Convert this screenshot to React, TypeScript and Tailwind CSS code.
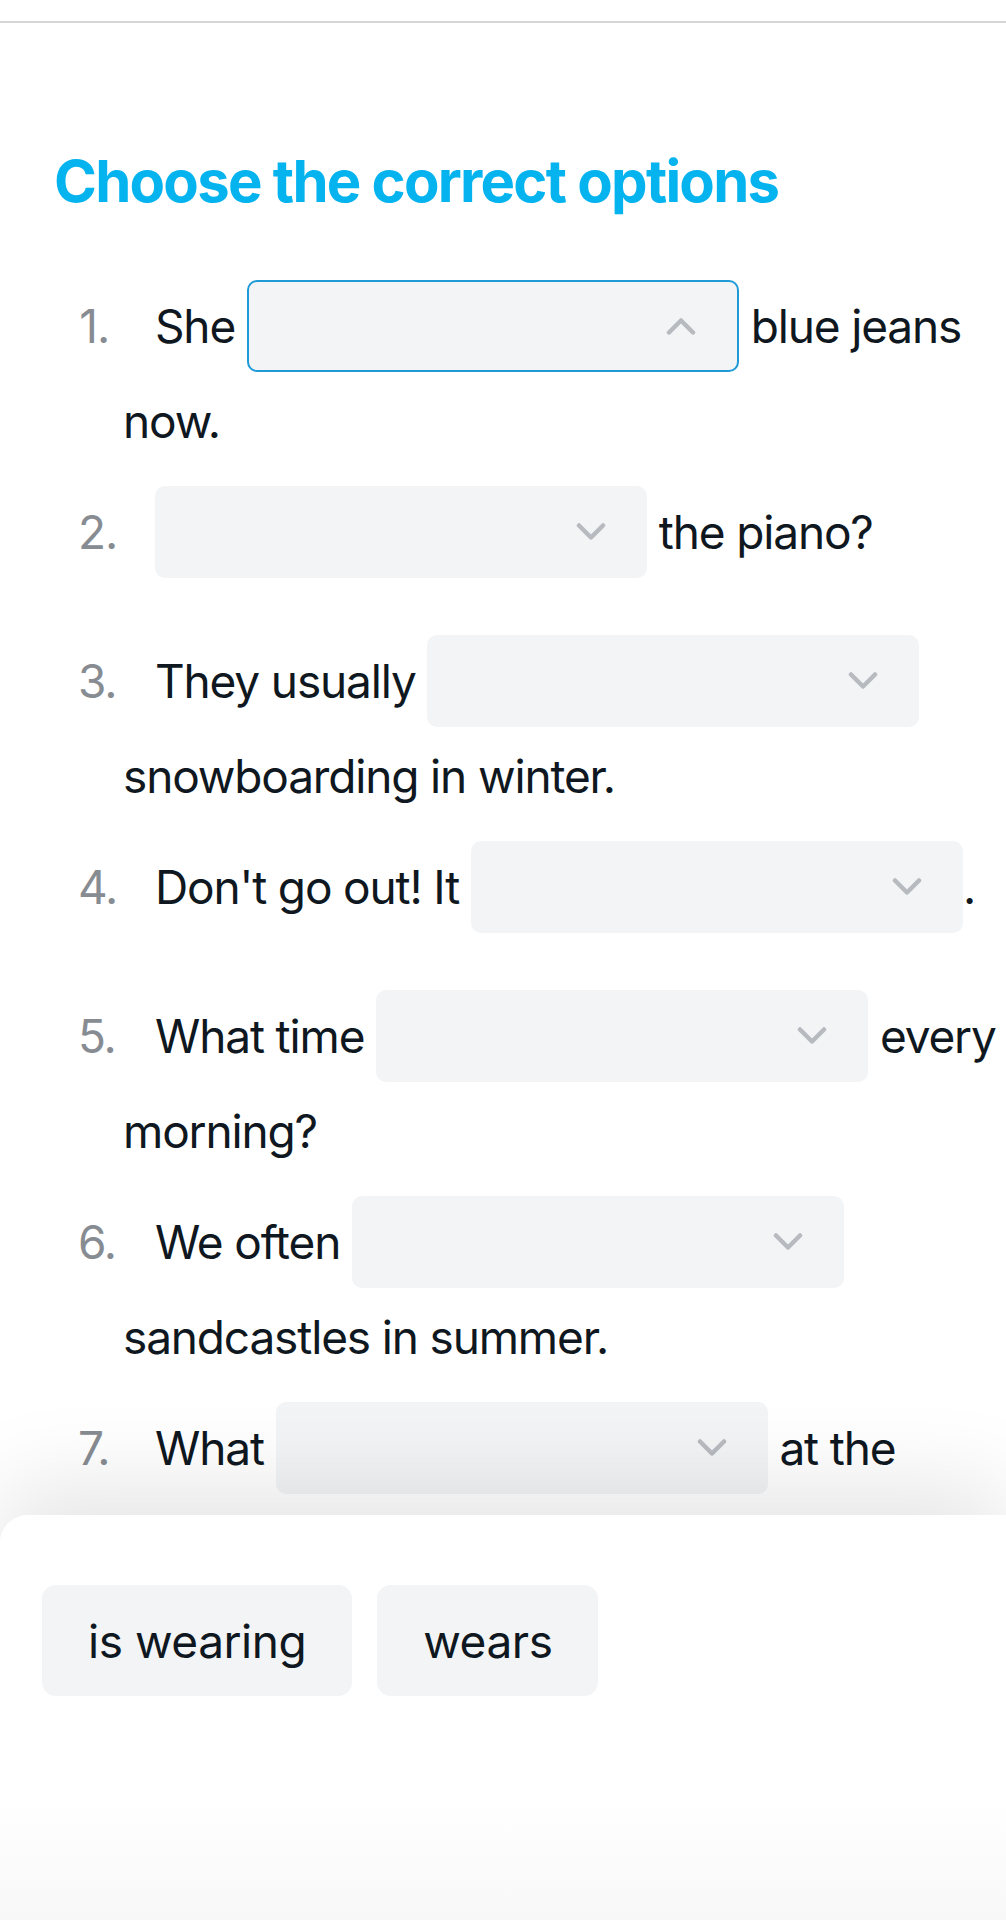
import React from 'react';

type Part = string | { blank: true; open?: boolean };

const items: Part[][] = [
  ['She ', { blank: true, open: true }, ' blue jeans now.'],
  [{ blank: true }, ' the piano?'],
  ['They usually ', { blank: true }, ' snowboarding in winter.'],
  ["Don't go out! It ", { blank: true }, '.'],
  ['What time ', { blank: true }, ' every morning?'],
  ['We often ', { blank: true }, ' sandcastles in summer.'],
  ['What ', { blank: true }, ' at the moment?'],
];

function Chevron({ up }: { up?: boolean }) {
  return (
    <svg width="30" height="18" viewBox="0 0 30 18" fill="none" className="shrink-0">
      <path
        d={up ? 'M3 15.5 15 3.5 27 15.5' : 'M3 2.5 15 14.5 27 2.5'}
        stroke="#b7bbc0"
        strokeWidth="4.5"
        strokeLinecap="round"
        strokeLinejoin="round"
      />
    </svg>
  );
}

function Blank({ open }: { open?: boolean }) {
  return (
    <span
      className={
        'inline-flex h-[92px] w-[492px] items-center justify-between rounded-[10px] bg-[#f3f4f6] pr-[41px] my-[21px] align-baseline ' +
        (open ? 'border-2 border-[#1e9bd7]' : '')
      }
    >
      <span className="text-transparent select-none">{'\u00a0'}</span>
      <Chevron up={open} />
    </span>
  );
}

export default function App() {
  return (
    <div className="relative h-[1920px] overflow-hidden bg-white font-['Inter',sans-serif]">
      <div className="h-[23px] border-b-2 border-[#d6d6d6]" />

      <main className="pl-[54px]">
        <h1 className="mt-[123px] text-[58px] font-bold leading-[70px] tracking-[-0.03em] text-[#05b3ef]">
          Choose the correct options
        </h1>

        <ol className="mt-[43px] mr-[-24px] pl-[69px] text-[46px] leading-[57px] tracking-[-0.025em] text-[#0f1720]">
          {items.map((parts, i) => (
            <li key={i} className="mb-[15px]">
              <span className="ml-[-45px] inline-block w-[77px] pr-[46px] text-right text-[#878c92]">
                {i + 1}.
              </span>
              {parts.map((p, j) =>
                typeof p === 'string' ? <React.Fragment key={j}>{p}</React.Fragment> : <Blank key={j} open={p.open} />
              )}
            </li>
          ))}
        </ol>
      </main>

      <div className="absolute left-0 right-0 top-[1515px] h-[405px] rounded-tl-[28px] bg-gradient-to-b from-white from-70% to-[#f8f8f8] shadow-[0_-30px_90px_rgba(0,0,0,0.1)]">
        <div className="flex gap-[25px] pl-[42px] pt-[70px]">
          {['is wearing', 'wears'].map((w) => (
            <button
              key={w}
              className="h-[111px] rounded-[14px] bg-[#f3f4f6] px-[46px] text-[46px] leading-[58px] tracking-[-0.01em] text-[#0f1720]"
            >
              {w}
            </button>
          ))}
        </div>
      </div>
    </div>
  );
}
